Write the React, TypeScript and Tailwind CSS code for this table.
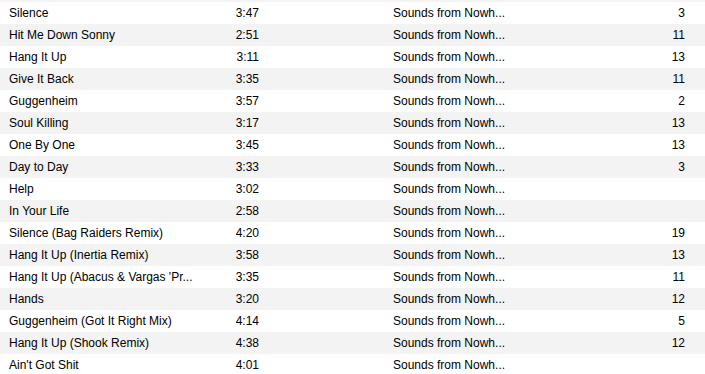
const tracks: [string, string, string][] = [
  ['Silence', '3:47', '3'],
  ['Hit Me Down Sonny', '2:51', '11'],
  ['Hang It Up', '3:11', '13'],
  ['Give It Back', '3:35', '11'],
  ['Guggenheim', '3:57', '2'],
  ['Soul Killing', '3:17', '13'],
  ['One By One', '3:45', '13'],
  ['Day to Day', '3:33', '3'],
  ['Help', '3:02', ''],
  ['In Your Life', '2:58', ''],
  ['Silence (Bag Raiders Remix)', '4:20', '19'],
  ['Hang It Up (Inertia Remix)', '3:58', '13'],
  ["Hang It Up (Abacus & Vargas 'Pr...", '3:35', '11'],
  ['Hands', '3:20', '12'],
  ['Guggenheim (Got It Right Mix)', '4:14', '5'],
  ['Hang It Up (Shook Remix)', '4:38', '12'],
  ["Ain't Got Shit", '4:01', ''],
]

export default function App() {
  return (
    <div className="w-[705px] h-[374px] overflow-hidden bg-white text-[12px] text-black font-['Segoe_UI','Liberation_Sans',sans-serif]">
      <div className="h-[2px] bg-[#f3f3f3]" />
      {tracks.map(([title, time, count], i) => (
        <div
          key={i}
          className={`flex h-[22px] items-center whitespace-nowrap ${i % 2 === 1 ? 'bg-[#f3f3f3]' : 'bg-white'}`}
        >
          <div className="w-[200px] overflow-hidden pl-[9px]">{title}</div>
          <div className="w-[59px] text-right">{time}</div>
          <div className="ml-[134px] w-[118px] overflow-hidden">Sounds from Nowh...</div>
          <div className="w-[174px] text-right">{count}</div>
        </div>
      ))}
    </div>
  )
}
